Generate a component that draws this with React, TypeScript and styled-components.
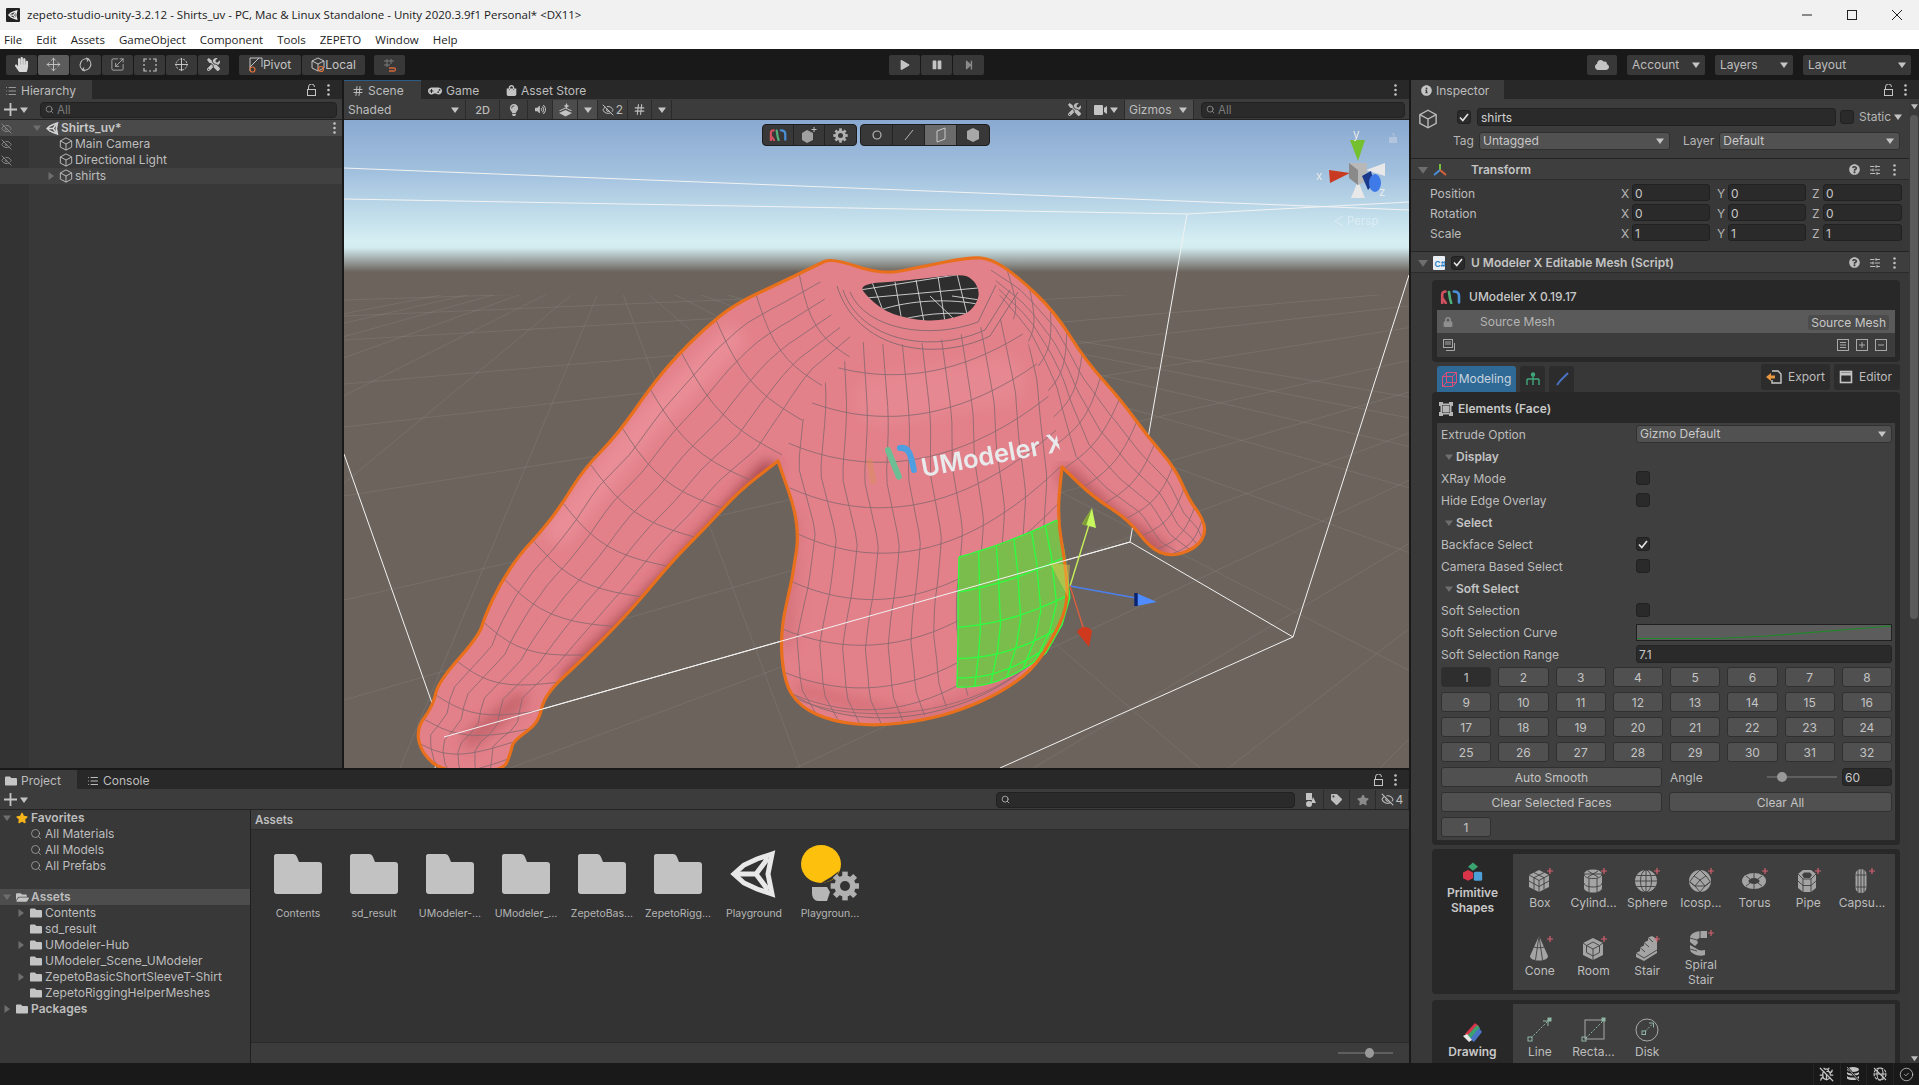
import React from "react";
import styled, { createGlobalStyle } from "styled-components";
import { FaTools, FaGamepad, FaShoppingBag, FaLightbulb, FaVolumeUp, FaQuestionCircle, FaInfoCircle, FaFolder, FaFolderOpen, FaStar, FaCloud, FaPlay, FaPause, FaStepForward, FaTag, FaLock, FaHandPaper } from "react-icons/fa";
import { Move, Scaling, Hash, EyeOff, SlidersHorizontal, Search, CircleCheck, List, BugOff } from "lucide-react";

const UI = `Inter, "Noto Sans", sans-serif`;
const WIN = `"Open Sans", "Noto Sans", sans-serif`;

const Global = createGlobalStyle`
  html, body { margin: 0; padding: 0; background: #191919; overflow: hidden; }
  * { box-sizing: border-box; }
  #root { width: 1919px; height: 1085px; }
`;

/* ---------- shell ---------- */
const Shell = styled.div`
  width: 1919px; height: 1085px; display: flex; flex-direction: column;
  font: 12px/16px ${UI}; color: #bdbdbd; overflow: hidden; background: #191919;
`;
const TitleBar = styled.div`
  height: 30px; flex: none; background: #f1f1f1; display: flex; align-items: center; padding-left: 6px;
  font: 11.5px/16px ${WIN}; color: #1a1a1a;
`;
const TitleLogo = styled.div`
  width: 14px; height: 14px; background: #222; margin-right: 7px; border-radius: 1px; display: flex; align-items: center; justify-content: center;
`;
const WinButtons = styled.div`
  margin-left: auto; display: flex; align-items: center; color: #222; padding-right: 17px; gap: 35px;
`;
const MenuBar = styled.div`
  height: 19px; flex: none; background: #fff; display: flex; align-items: center; padding-left: 4px; gap: 14px;
  font: 11.5px/16px ${WIN}; color: #222;
`;
const Toolbar = styled.div`
  height: 31px; flex: none; background: #191919; display: flex; align-items: center; padding: 0 8px 0 6px;
`;
const ToolGroup = styled.div<{ $ml?: number }>`
  display: flex; gap: 1px; margin-left: ${p => p.$ml ?? 0}px; align-items: center;
`;
const ToolBtn = styled.div<{ $active?: boolean; $w?: number; $auto?: boolean }>`
  width: ${p => p.$w ?? 31}px; height: 20px; background: ${p => (p.$active ? "#5c5c5c" : "#383838")};
  margin-left: ${p => (p.$auto ? "auto" : "0")};
  display: flex; align-items: center; justify-content: center; color: #c4c4c4; font-size: 12px; border-radius: 2px; flex: none;
`;
const DropBtn = styled.div<{ $w: number; $ml: number }>`
  width: ${p => p.$w}px; margin-left: ${p => p.$ml}px; height: 20px; background: #383838; border-radius: 2px;
  display: flex; align-items: center; justify-content: space-between; padding: 0 5px; color: #bdbdbd; flex: none;
`;
const Main = styled.div`flex: 1; display: flex; min-height: 0;`;
const LeftArea = styled.div`width: 1409px; flex: none; display: flex; flex-direction: column;`;
const TopRow = styled.div`height: 688px; flex: none; display: flex; gap: 2px;`;
const Hierarchy = styled.div`width: 342px; flex: none; display: flex; flex-direction: column; background: #383838;`;
const SceneCol = styled.div`flex: 1; display: flex; flex-direction: column; min-width: 0;`;
const TabBar = styled.div`
  height: 19px; flex: none; background: #282828; display: flex; align-items: stretch; color: #bdbdbd;
`;
const Tab = styled.div<{ $active?: boolean; $w?: number; $blue?: boolean }>`
  width: ${p => (p.$w ? p.$w + "px" : "auto")}; flex: none; display: flex; align-items: center; gap: 4px; padding: 1px 0 0 5px;
  background: ${p => (p.$active ? "#3c3c3c" : "transparent")};
  border-top: 1px solid ${p => (p.$blue ? "#2c5d87" : "transparent")};
`;
const TabIcon = styled.span<{ $ml?: number }>`display: flex; margin-left: ${p => p.$ml ?? 0}px;`;
const TabEnd = styled.div`
  margin-left: auto; display: flex; align-items: center; gap: 11px; padding-right: 12px; color: #c4c4c4;
`;
const Strip = styled.div`
  height: 21px; flex: none; background: #3c3c3c; border-bottom: 1px solid #232323; display: flex; align-items: center; padding-top: 1px;
`;
const PlusBtn = styled.div`
  width: 30px; flex: none; display: flex; align-items: center; padding-left: 4px; gap: 3px; color: #c4c4c4;
`;
const SearchField = styled.div<{ $w?: number; $ml?: number }>`
  width: ${p => (p.$w ? p.$w + "px" : "auto")}; flex: ${p => (p.$w ? "none" : 1)}; height: 16px; background: #2a2a2a; border: 1px solid #212121; border-radius: 4px;
  display: flex; align-items: center; padding-left: 4px; gap: 3px; color: #7c7c7c; font-size: 11.5px;
  margin: 0 ${p => (p.$w ? 0 : 5)}px 0 ${p => p.$ml ?? 10}px;
`;
const HierList = styled.div`flex: 1; background: linear-gradient(90deg, #333 29px, #383838 29px);`;
const HRow = styled.div<{ $bg?: string; $strong?: boolean }>`
  height: 16px; display: flex; align-items: center; background: ${p => p.$bg ?? "transparent"};
  font-weight: ${p => (p.$strong ? 600 : 400)}; color: ${p => (p.$strong ? "#c8c8c8" : "#bdbdbd")}; font-size: 12px;
`;
const Gutter = styled.div`width: 29px; flex: none; padding-left: 1px; display: flex; align-items: center; color: #8a8a8a;`;
const HArrow = styled.div<{ $w: number }>`width: ${p => p.$w}px; flex: none; display: flex; justify-content: flex-end; padding-right: 3px;`;
const IconSlot = styled.div<{ $w?: number }>`
  width: ${p => p.$w ?? 16}px; flex: none; display: flex; align-items: center; justify-content: center;
`;
const RowEnd = styled.div`margin-left: auto; padding-right: 6px; display: flex; color: #c4c4c4;`;
const SceneStrip = styled(Strip)`padding-right: 4px;`;
const SBtn = styled.div<{ $w: number; $active?: boolean; $left?: boolean; $ml?: number }>`
  width: ${p => p.$w}px; height: 19px; flex: none; display: flex; align-items: center; justify-content: ${p => (p.$left ? "space-between" : "center")};
  gap: 2px; padding: ${p => (p.$left ? "0 6px 0 4px" : "0")}; border-right: 1px solid #2b2b2b; color: #bdbdbd; margin-left: ${p => p.$ml ?? 0}px;
  background: ${p => (p.$active ? "#4c4c4c" : "transparent")};
`;
const TwoD = styled.span`font-weight: 500; font-size: 11px;`;
const Spacer = styled.div`flex: 1;`;
const Viewport = styled.div`position: relative; flex: 1; overflow: hidden; background: #6a625b;`;
const SceneSvg = styled.svg`display: block; width: 1065px; height: 648px;`;
const OverlayBar = styled.div`
  position: absolute; left: 418px; top: 4px; display: flex; gap: 3px;
`;
const OverlayGroup = styled.div`
  display: flex; background: #383838; border: 1px solid #1d1d1d; border-radius: 4px; overflow: hidden; height: 22px;
`;
const OverlayBtn = styled.div<{ $active?: boolean; $w?: number }>`
  width: ${p => p.$w ?? 32}px; display: flex; align-items: center; justify-content: center; color: #b5b5b5;
  background: ${p => (p.$active ? "#6b6b6b" : "transparent")};
  border-right: 1px solid #232323;
  &:last-child { border-right: 0; }
`;

/* ---------- project ---------- */
const Project = styled.div`flex: 1; margin-top: 2px; display: flex; flex-direction: column; min-height: 0;`;
const ProjBody = styled.div`flex: 1; display: flex; min-height: 0;`;
const ProjTree = styled.div`width: 250px; flex: none; background: #383838;`;
const TRow = styled.div<{ $level?: number; $sel?: boolean; $top?: number; $strong?: boolean }>`
  height: 16px; display: flex; align-items: center; padding-left: ${p => (p.$level ?? 0) * 14}px;
  margin-top: ${p => p.$top ?? 0}px; background: ${p => (p.$sel ? "#4d4d4d" : "transparent")};
  font-weight: ${p => (p.$strong ? 600 : 400)};
`;
const ArrowSlot = styled.div`width: 14px; flex: none; display: flex; justify-content: center;`;
const TLabel = styled.span`margin-left: 1px; white-space: nowrap;`;
const ProjRight = styled.div`flex: 1; border-left: 1px solid #1f1f1f; display: flex; flex-direction: column; background: #333;`;
const AssetsHead = styled.div`
  height: 20px; flex: none; background: #3e3e3e; border-bottom: 1px solid #2b2b2b; padding-left: 4px;
  display: flex; align-items: center; font-weight: 600; color: #bdbdbd; font-size: 11.5px;
`;
const AssetGrid = styled.div`flex: 1; display: flex; padding: 15px 0 0 9px;`;
const AssetCell = styled.div`width: 76px; flex: none; display: flex; flex-direction: column; align-items: center;`;
const AssetIcon = styled.div`height: 57px; display: flex; align-items: center; justify-content: center;`;
const AssetName = styled.div`margin-top: 5px; font-size: 10.5px; line-height: 14px; color: #b5b5b5; white-space: nowrap;`;
const ProjFoot = styled.div`
  height: 21px; flex: none; background: #3c3c3c; border-top: 1px solid #2b2b2b; display: flex; align-items: center; justify-content: flex-end; padding-right: 16px;
`;
const MiniSlider = styled.div`width: 55px; height: 2px; background: #5f5f5f; position: relative;`;
const MiniThumb = styled.div<{ $x: number; $d?: number }>`
  position: absolute; left: ${p => p.$x}px; top: 50%; width: ${p => p.$d ?? 9}px; height: ${p => p.$d ?? 10}px; border-radius: 50%; background: #999; transform: translateY(-50%);
`;

/* ---------- inspector ---------- */
const Splitter = styled.div`width: 2px; flex: none; background: #191919;`;
const Inspector = styled.div`flex: 1; display: flex; flex-direction: column; min-width: 0; background: #383838;`;
const InspBody = styled.div`flex: 1; display: flex; min-height: 0;`;
const InspContent = styled.div`flex: 1; overflow: hidden; display: flex; flex-direction: column; min-width: 0;`;
const Scrollbar = styled.div`
  width: 10px; flex: none; background: #3a3a3a; display: flex; flex-direction: column; align-items: center; padding-top: 4px;
`;
const ScrollThumb = styled.div`width: 8px; height: 504px; background: #5a5a5a; border-radius: 4px; margin-top: 5px;`;
const ScrollDown = styled.div`margin-top: auto; height: 10px; display: flex; align-items: center;`;
const ObjectHead = styled.div`
  height: 60px; flex: none; background: #3c3c3c; border-bottom: 1px solid #232323; display: flex;
`;
const ObjIcon = styled.div`width: 42px; flex: none; padding: 10px 0 0 7px; color: #bdbdbd; display: flex; align-items: flex-start;`;
const ObjCol = styled.div`flex: 1; display: flex; flex-direction: column; padding-top: 9px; gap: 6px;`;
const ObjRow = styled.div`height: 18px; display: flex; align-items: center;`;
const Check = styled.div<{ $ml?: number }>`
  width: 14px; height: 14px; flex: none; background: #2a2a2a; border: 1px solid #212121; border-radius: 3px; margin-left: ${p => p.$ml ?? 0}px;
  display: flex; align-items: center; justify-content: center;
`;
const NameField = styled.div`
  width: 359px; height: 18px; flex: none; margin-left: 6px; background: #2a2a2a; border: 1px solid #212121; border-radius: 3px; padding-left: 3px; color: #d2d2d2; font-size: 12px; line-height: 18px;
`;
const Dropdown = styled.div<{ $w: number; $ml?: number }>`
  width: ${p => p.$w}px; height: 18px; flex: none; margin-left: ${p => p.$ml ?? 0}px; background: #515151; border: 1px solid #303030; border-radius: 3px;
  display: flex; align-items: center; justify-content: space-between; padding: 0 5px 0 3px; color: #c8c8c8; font-size: 12px;
`;
const SmallLabel = styled.span<{ $ml?: number }>`margin-left: ${p => p.$ml ?? 0}px; color: #b5b5b5;`;
const CaretWrap = styled.span`margin-left: 3px; display: flex;`;
const CompHead = styled.div`
  height: 21px; flex: none; background: #3e3e3e; border-bottom: 1px solid #2b2b2b; display: flex; align-items: center; font-weight: 600; color: #c4c4c4; padding-top: 1px;
`;
const HeadArrow = styled.div`width: 22px; flex: none; display: flex; justify-content: flex-end; padding-right: 5px;`;
const HeadIcon = styled.div<{ $w: number }>`width: ${p => p.$w}px; flex: none; display: flex; align-items: center; gap: 6px;`;
const HeadTools = styled.div`margin-left: auto; display: flex; align-items: center; gap: 9px; padding-right: 13px; color: #bdbdbd;`;
const DotsWrap = styled.span`display: flex; margin-left: 3px;`;
const TransformBody = styled.div`
  flex: none; padding: 4px 0 0 19px; height: 72px; display: flex; flex-direction: column; gap: 3px; border-bottom: 1px solid #232323;
`;
const VecRow = styled.div`height: 17px; display: flex; align-items: center;`;
const VecLabel = styled.div`width: 191px; flex: none; padding-top: 2px;`;
const Axis = styled.div<{ $w: number; $ml?: number }>`width: ${p => p.$w}px; flex: none; color: #b5b5b5; margin-left: ${p => p.$ml ?? 0}px; padding-top: 2px;`;
const VecField = styled.div<{ $w: number }>`
  width: ${p => p.$w}px; flex: none; height: 17px; background: #2a2a2a; border: 1px solid #212121; border-radius: 3px; padding-left: 2px; line-height: 17px; color: #c8c8c8;
`;
const Card = styled.div<{ $mt?: number }>`
  margin: ${p => p.$mt ?? 0}px 9px 0 21px; background: #282828; border-radius: 4px; flex: none; overflow: hidden;
`;
const ScriptBody = styled.div`flex: none; padding-top: 7px; display: flex; flex-direction: column;`;
const CardTitle = styled.div`
  height: 30px; display: flex; align-items: center; padding: 3px 0 0 8px; gap: 8px; font-weight: 500; color: #c8c8c8;
`;
const SrcRow = styled.div`
  height: 23px; margin: 0 5px; background: #5a5a5a; display: flex; align-items: center; padding: 1px 6px 0; color: #b5b5b5;
`;
const SrcLabel = styled.span`margin-left: 27px;`;
const SrcPill = styled.div`margin-left: auto; background: #4c4c4c; border-radius: 3px; padding: 0 3px; color: #c8c8c8; height: 15px; line-height: 15px;`;
const SrcFoot = styled.div`
  height: 24px; margin: 0 5px 5px; background: #3c3c3c; display: flex; align-items: center; padding: 0 8px 0 6px; color: #a8a8a8;
`;
const MiniIcons = styled.div`margin-left: auto; display: flex; gap: 7px;`;
const TabsRow = styled.div`
  height: 30px; flex: none; margin: 0 9px 0 26px; display: flex; align-items: flex-end;
`;
const ModeTab = styled.div<{ $w: number; $active?: boolean }>`
  width: ${p => p.$w}px; height: 26px; flex: none; margin-right: 4px; background: ${p => (p.$active ? "#2f6a96" : "#2c2c2c")};
  border-radius: 3px 3px 0 0; display: flex; align-items: center; justify-content: center; gap: 2px; color: #c8d4de;
`;
const ActionBtn = styled.div<{ $w: number; $ml?: string }>`
  width: ${p => p.$w}px; height: 26px; flex: none; margin: 0 0 2px ${p => p.$ml ?? "4px"}; background: #2c2c2c; border-radius: 3px;
  display: flex; align-items: center; padding-left: 5px; gap: 6px; color: #bdbdbd;
`;
const SectionHead = styled.div`
  height: 31px; display: flex; align-items: center; padding: 3px 0 0 7px; gap: 5px; font-weight: 600; color: #c8c8c8;
`;
const SectionBody = styled.div`margin: 0 5px 5px; background: #3f3f3f; padding: 0 3px 3px 4px;`;
const SetRow = styled.div`height: 22px; display: flex; align-items: center;`;
const SetLabel = styled.div`width: 195px; flex: none; white-space: nowrap; padding-top: 2px;`;
const Foldout = styled.div`height: 22px; display: flex; align-items: center; padding: 1px 0 0 4px; gap: 3px; font-weight: 600; color: #c4c4c4;`;
const CurveField = styled.div`width: 256px; height: 17px; flex: none; background: #5c5c5c; border: 1px solid #202020;`;
const TextField = styled.div<{ $w: number; $ml?: number }>`
  width: ${p => p.$w}px; height: 18px; flex: none; margin-left: ${p => p.$ml ?? 0}px; background: #2a2a2a; border-radius: 3px; border: 1px solid #232323; padding-left: 2px; line-height: 17px; color: #c8c8c8;
`;
const NumGrid = styled.div`
  display: grid; grid-template-columns: repeat(8, 1fr); gap: 5px 7px; margin-top: 2px;
`;
const Btn = styled.div<{ $dark?: boolean }>`
  height: 20px; background: ${p => (p.$dark ? "#2e2e2e" : "#505050")}; border: 1px solid #303030; border-radius: 3px; padding-top: 1px;
  display: flex; align-items: center; justify-content: center; color: #c4c4c4;
`;
const WideGrid = styled.div`display: grid; grid-template-columns: 221px 223px; gap: 5px 7px; margin-top: 5px; align-items: center;`;
const AngleRow = styled.div`display: flex; align-items: center;`;
const AngleLabel = styled.span`width: 97px; flex: none; margin-left: 1px; padding-top: 2px;`;
const AngleSlider = styled.div`width: 70px; flex: none; height: 2px; background: #5f5f5f; position: relative;`;
const OneBtn = styled(Btn)`width: 50px; margin-top: 5px;`;
const ToolCard = styled(Card)`display: flex; min-height: 145px;`;
const ToolSide = styled.div<{ $pt: number }>`
  width: 81px; flex: none; padding-top: ${p => p.$pt}px; display: flex; flex-direction: column; align-items: center; text-align: center; font-weight: 600; line-height: 15px; color: #c8c8c8;
`;
const SideIcon = styled.div`height: 22px; margin-bottom: 1px;`;
const ToolGrid = styled.div<{ $mt?: number }>`
  flex: 1; margin: ${p => p.$mt ?? 5}px 5px 4px 0; background: #3f3f3f; display: grid; grid-template-columns: repeat(7, 53.7px); grid-auto-rows: 68px; align-content: start;
`;
const ToolItem = styled.div<{ $pt?: number }>`
  display: flex; flex-direction: column; align-items: center; padding-top: ${p => p.$pt ?? 13}px; text-align: center; line-height: 15px; white-space: nowrap; color: #bdbdbd;
`;
const ToolIcon = styled.div`height: 28px; width: 36px; display: flex; justify-content: center; align-items: center;`;
const StatusBar = styled.div`
  height: 22px; flex: none; background: #191919; display: flex; align-items: center; justify-content: flex-end; color: #c4c4c4;
`;
const StatusCell = styled.div`width: 26.5px; height: 22px; display: flex; align-items: center; justify-content: center; border-left: 1px solid #242424;`;

/* ---------- small drawings ---------- */
const Tri: React.FC<{ dir?: "d" | "r"; c?: string; s?: number }> = ({ dir = "d", c = "#6e6e6e", s = 8 }) => (
  <svg width={s} height={s} viewBox="0 0 8 8">
    <path d={dir === "d" ? "M0 1.5H8L4 7Z" : "M1.5 0V8L7 4Z"} fill={c} />
  </svg>
);
const Caret = () => <Tri c="#c4c4c4" />;
const Dots: React.FC = () => (
  <svg width="3" height="12" viewBox="0 0 3 12" fill="currentColor">
    <circle cx="1.5" cy="1.5" r="1.3" /><circle cx="1.5" cy="6" r="1.3" /><circle cx="1.5" cy="10.5" r="1.3" />
  </svg>
);
const Unlock = () => (
  <svg width="9" height="12" viewBox="0 0 9 12" fill="none" stroke="currentColor">
    <path d="M1.5 5.5V3a3 3 0 0 1 6 0" /><rect x=".5" y="5.5" width="8" height="6" />
  </svg>
);
const Cube: React.FC<{ s?: number }> = ({ s = 14 }) => (
  <svg width={s} height={s} viewBox="0 0 16 16" fill="none" stroke="#bdbdbd" strokeWidth="1.1">
    <path d="M8 1L14.5 4.5V11.5L8 15L1.5 11.5V4.5Z" /><path d="M1.5 4.5L8 8L14.5 4.5M8 8V15" />
  </svg>
);
const UnityMark: React.FC<{ s: number; c?: string; w?: number }> = ({ s, c = "#e8e8e8", w = 5 }) => (
  <svg width={s} height={s} viewBox="0 0 48 48" fill="none" stroke={c} strokeWidth={w} strokeLinejoin="miter">
    <path d="M42 4L27 9 14 15 4 24 14 33 27 39 42 44 38 24Z" />
    <path d="M4 24H26L38 8M26 24L38 40" />
  </svg>
);
const UMark: React.FC<{ h?: number }> = ({ h = 14 }) => (
  <svg width={h * 1.5} height={h} viewBox="0 0 21 14" fill="none" strokeWidth="2.6" strokeLinecap="round">
    <path d="M2.2 13V4.5C2.2 2 4 1.5 5.5 1.5" stroke="#d2505f" /><path d="M3 9L5.8 13" stroke="#d2505f" />
    <path d="M9 2L10 8.5 11.2 13" stroke="#4fb07a" />
    <path d="M13.8 1.5C17.5 1.5 19 3 19 6V12.5" stroke="#4a8fd8" />
  </svg>
);
const CheckMark = () => (
  <svg width="10" height="9" viewBox="0 0 10 9" fill="none" stroke="#e4e4e4" strokeWidth="1.6"><path d="M1 4.5L3.8 7.5 9 1" /></svg>
);
const Folder = () => (
  <svg width="48" height="40" viewBox="0 0 48 40">
    <path d="M2 0H19C21 0 22 1 23 3L25 8H45C47 8 48 9 48 11V37C48 39 47 40 45 40H3C1 40 0 39 0 37V2C0 1 1 0 2 0Z" fill="#c2c2c2" />
  </svg>
);
const Gear: React.FC<{ s: number; c?: string; bg?: string }> = ({ s, c = "#b0b0b0", bg = "#333" }) => (
  <svg width={s} height={s} viewBox="0 0 24 24">
    <g fill={c}>
      {[0, 45, 90, 135, 180, 225, 270, 315].map(a => <rect key={a} x="9.8" y="0.5" width="4.4" height="5.5" transform={`rotate(${a} 12 12)`} />)}
      <circle cx="12" cy="12" r="8.5" />
    </g>
    <circle cx="12" cy="12" r="4" fill={bg} />
  </svg>
);
const Bulb = () => (
  <svg width="58" height="58" viewBox="0 0 58 58">
    <ellipse cx="20" cy="19" rx="20" ry="19" fill="#fdc00d" />
    <path d="M20 38C28 38 35 33 38 26L30 32Z" fill="#333" />
    <path d="M11 42H26L29 47 26 56H17C13 56 11 52 11 48Z" fill="#b6b6b6" />
    <g transform="translate(29 26)"><Gear s={30} bg="#333" /></g>
  </svg>
);
const PlusMark = () => <path d="M24 1V7M21 4H27" stroke="#d4606e" strokeWidth="1.2" fill="none" />;
const Prim: React.FC<{ k: string }> = ({ k }) => {
  const ln = { stroke: "#3f3f3f", strokeWidth: 0.9, fill: "none" };
  const fl = "#a4a4a4";
  const shapes: Record<string, React.ReactNode> = {
    box: <><path d="M13 3L23 8V20L13 25 3 20V8Z" fill={fl} /><path d="M3 8L13 13.5 23 8M13 13.5V25M8 5.5L18 10.7M18 5.5L8 10.7M3 14L13 19.5 23 14M8 10.7V22.5M18 10.7V22.5" {...ln} /></>,
    cyl: <><path d="M4 7V21C4 23.5 8 25.5 13 25.5S22 23.5 22 21V7Z" fill={fl} /><ellipse cx="13" cy="7" rx="9" ry="4.5" fill={fl} /><path d="M4 7C4 10 8 11.5 13 11.5S22 10 22 7M4 16C4 18.5 8 20 13 20S22 18.5 22 16M9 11V25M17 11V25M8 4L18 10M18 4L8 10M4 7H22" {...ln} /></>,
    sph: <><circle cx="13" cy="14" r="11" fill={fl} /><path d="M2 14H24M3.5 8.5H22.5M3.5 19.5H22.5" {...ln} /><ellipse cx="13" cy="14" rx="5.5" ry="11" {...ln} /><path d="M13 3V25" {...ln} /></>,
    ico: <><circle cx="13" cy="14" r="11" fill={fl} /><path d="M13 3L7 9 13 13 19 9ZM7 9L2.5 15 8 19 13 13M19 9L23.5 15 18 19 13 13M8 19H18L13 25ZM8 19L3 15M18 19L23 15" {...ln} /></>,
    tor: <><ellipse cx="13" cy="14" rx="12" ry="8" fill={fl} /><ellipse cx="13" cy="14" rx="5.5" ry="3" fill="#3f3f3f" /><path d="M5 9L9 12M21 9L17 12M5 19L9 16M21 19L17 16M13 6V11M13 17V22" {...ln} /></>,
    pip: <><path d="M4 7L9 3H17L22 7V21L17 25H9L4 21Z" fill={fl} /><path d="M8 8L10 5.5H16L18 8 16 11H10Z" fill="#3f3f3f" /><path d="M4 7L9 12H17L22 7M4 14L9 18.5H17L22 14M9 12V25M17 12V25" {...ln} /></>,
    cap: <><rect x="7.5" y="2" width="11" height="24" rx="5.5" fill={fl} /><path d="M13 2V26M10 3V25M16 3V25M7.5 8H18.5M7.5 20H18.5" {...ln} /></>,
    con: <><path d="M13 1L22 21C22 24 18 25.5 13 25.5S4 24 4 21Z" fill={fl} /><path d="M13 1L9.5 25M13 1L16.5 25M8 12C10 13 16 13 18 12" {...ln} /></>,
    rom: <><path d="M13 3L23 8V20L13 25 3 20V8Z" fill={fl} /><path d="M13 7L19.5 10.5V17.5L13 21 6.5 17.5V10.5Z" {...ln} /><path d="M3 8L6.5 10.5M23 8L19.5 10.5M13 25V21M6.5 10.5L13 14 19.5 10.5M13 14V21" {...ln} /></>,
    sta: <><path d="M3 22L3 18 7 16V12.5L11 10.5V7.5L15 5.5V2.5L19 1 24 4V18L11 26Z" fill={fl} /><path d="M3 18L11 23 24 15M7 12.5L12 17M11 7.5L16 12M15 2.5L20 7" {...ln} /></>,
    spi: <><path d="M3 9C3 5 8 2 15 2H20V9H13C12 9 10 10 10 11L11 14 8 17 3 13ZM3 16L10 20C11 21 14 22 18 21V26C12 28 3 25 3 20Z" fill={fl} /><path d="M3 9L10 11M13 2V9M3 20L10 22" {...ln} /></>,
  };
  return <svg width="28" height="28" viewBox="0 0 28 28">{shapes[k]}<PlusMark /></svg>;
};
const DrawIcon: React.FC<{ k: string }> = ({ k }) => (
  <svg width="28" height="28" viewBox="0 0 28 28" fill="none" stroke="#8fb7a5" strokeWidth="1">
    {k === "line" && <><path d="M5 22L23 4" strokeDasharray="2 1.5" /><rect x="2" y="21" width="4" height="4" /><rect x="22" y="2" width="3" height="3" fill="#8fb7a5" /><path d="M17 5H22V10" /></>}
    {k === "rect" && <><rect x="5" y="4" width="19" height="19" stroke="#a8a8a8" /><path d="M6 22L23 5" strokeDasharray="2 1.5" /><rect x="2" y="21" width="4" height="4" /><rect x="22" y="2" width="3" height="3" fill="#8fb7a5" /></>}
    {k === "disk" && <><circle cx="14" cy="14" r="11" stroke="#a8a8a8" /><rect x="9" y="15" width="3.5" height="3.5" /><path d="M12.5 15L20 7.5" strokeDasharray="2 1.5" /><path d="M16 7H20.5V11.5" /></>}
  </svg>
);

/* ---------- mesh helpers ---------- */
type P = [number, number];
function at(poly: P[], u: number): P {
  const seg: number[] = [];
  let tot = 0;
  for (let i = 1; i < poly.length; i++) {
    const d = Math.hypot(poly[i][0] - poly[i - 1][0], poly[i][1] - poly[i - 1][1]);
    seg.push(d); tot += d;
  }
  let t = u * tot;
  for (let i = 0; i < seg.length; i++) {
    if (t <= seg[i] || i === seg.length - 1) {
      const k = seg[i] ? t / seg[i] : 0;
      return [poly[i][0] + (poly[i + 1][0] - poly[i][0]) * k, poly[i][1] + (poly[i + 1][1] - poly[i][1]) * k];
    }
    t -= seg[i];
  }
  return poly[poly.length - 1];
}
const f = (n: number) => n.toFixed(1);
const line = (pts: P[]) => "M" + pts.map(p => f(p[0]) + " " + f(p[1])).join("L");
function smooth(pts: P[]): string {
  const n = pts.length;
  const mid = (a: P, b: P): P => [(a[0] + b[0]) / 2, (a[1] + b[1]) / 2];
  const s = mid(pts[n - 1], pts[0]);
  let d = `M${f(s[0])} ${f(s[1])}`;
  for (let i = 0; i < n; i++) { const m = mid(pts[i], pts[(i + 1) % n]); d += `Q${f(pts[i][0])} ${f(pts[i][1])} ${f(m[0])} ${f(m[1])}`; }
  return d + "Z";
}
function armGrid(T: P[], B: P[], us: number[], vs: number[], bow: number): string {
  const out: string[] = [];
  const dx = T[T.length - 1][0] - T[0][0], dy = T[T.length - 1][1] - T[0][1];
  const L = Math.hypot(dx, dy);
  const sample = (u: number, v: number): P => {
    const a = at(T, u), b = at(B, u);
    const s = Math.sin(Math.PI * v) * bow;
    return [a[0] + (b[0] - a[0]) * v + (dx / L) * s, a[1] + (b[1] - a[1]) * v + (dy / L) * s];
  };
  us.forEach(u => { const p: P[] = []; for (let i = 0; i <= 10; i++) p.push(sample(u, i / 10)); out.push(line(p)); });
  vs.forEach(v => { const p: P[] = []; for (let i = 0; i <= 48; i++) p.push(sample(i / 48, v)); out.push(line(p)); });
  return out.join("");
}
function bodyGrid(L: P[], R: P[], sag: (v: number) => number, vs: number[], ws: number[]) {
  const pt = (v: number, t: number): P => {
    const a = at(L, v), b = at(R, v);
    const s = sag(v);
    const cx = (a[0] + b[0]) / 2, cy = (a[1] + b[1]) / 2 + s;
    const q = 1 - t;
    return [q * q * a[0] + 2 * q * t * cx + t * t * b[0], q * q * a[1] + 2 * q * t * cy + t * t * b[1]];
  };
  const out: string[] = [];
  vs.forEach(v => { const p: P[] = []; for (let i = 0; i <= 24; i++) p.push(pt(v, i / 24)); out.push(line(p)); });
  ws.forEach(w => { const p: P[] = []; for (let i = 0; i <= 30; i++) p.push(pt(i / 30, w)); out.push(line(p)); });
  return { d: out.join(""), pt };
}
const steps = (a: number, b: number, n: number) => Array.from({ length: n + 1 }, (_, i) => a + ((b - a) * i) / n);

const silhouette: P[] = [
  [832, 258], [817, 265], [778, 284], [735, 304], [704, 329], [674, 359], [650, 388], [618, 434], [583, 470], [561, 506], [539, 534], [520, 554], [500, 584], [485, 616], [479, 636], [438, 682], [433, 706], [416, 729], [422, 754], [444, 772], [503, 772], [511, 752], [513, 741], [539, 723], [544, 695], [583, 659], [618, 624], [644, 595], [674, 559], [709, 524], [739, 491], [778, 461], [778, 461], [800, 524], [793, 577], [780, 631], [784, 682], [800, 707], [834, 722], [878, 726], [925, 720], [961, 710], [1000, 693], [1032, 670], [1050, 643], [1068, 607], [1066, 567], [1057, 517], [1062, 467], [1062, 467], [1093, 497], [1129, 520], [1150, 548], [1171, 557], [1196, 548], [1206, 533], [1202, 517], [1189, 500], [1175, 468], [1148, 437], [1121, 400], [1085, 360], [1055, 312], [1016, 275], [991, 259], [971, 257], [925, 266], [882, 275],
];
const silPath = smooth(silhouette);
const neckHole: P[] = [[858, 284], [904, 281], [960, 274], [972, 278], [980, 291], [976, 305], [964, 316], [930, 322], [891, 315], [869, 299]];

const armT: P[] = [[817, 262], [778, 282], [735, 302], [704, 327], [674, 359], [650, 388], [618, 434], [583, 470], [561, 506], [539, 534], [520, 554], [500, 584], [485, 616], [479, 636], [438, 682], [433, 706], [416, 729], [422, 754], [444, 775]];
const armB: P[] = [[862, 345], [825, 380], [800, 425], [778, 461], [739, 491], [709, 524], [674, 559], [644, 595], [618, 624], [583, 659], [544, 695], [539, 723], [513, 741], [511, 752], [503, 775]];
const armGridL = armGrid(armT, armB, [.03, .1, .17, .24, .31, .38, .45, .52, .59, .66, .73, .8, .86, .9, .94, .97], [.17, .33, .5, .67, .83], 14);
const armTR: P[] = [[985, 258], [1016, 275], [1055, 312], [1085, 360], [1121, 400], [1148, 437], [1175, 468], [1189, 500], [1202, 517], [1206, 533]];
const armBR: P[] = [[1000, 300], [1028, 340], [1050, 395], [1062, 467], [1093, 497], [1129, 520], [1150, 548], [1171, 557], [1180, 555]];
const armGridR = armGrid(armTR, armBR, [.07, .15, .23, .31, .39, .47, .55, .63, .71, .79, .86, .92, .96], [.2, .4, .6, .8], 8);
const bodyL: P[] = [[790, 318], [790, 390], [782, 460], [800, 524], [793, 577], [780, 631], [784, 682], [800, 707]];
const bodyR: P[] = [[1032, 300], [1050, 370], [1060, 467], [1057, 517], [1066, 567], [1068, 605]];
const bodySurf = bodyGrid(bodyL, bodyR, v => 70 + v * 42, [.08, .19, .31, .43, .55, .67, .79, .9, .96], steps(.06, .95, 11));

const patchL: P[] = [[959, 557], [958, 600], [958, 640], [957, 687]];
const patchR: P[] = [[1057, 520], [1064, 550], [1070, 597], [1062, 625], [1046, 653]];
const patchSurf = bodyGrid(patchL, patchR, v => 5 + v * 14, [0, .27, .54, .78, .93, 1], [0, .2, .38, .56, .74, .88, 1]);
const patchOutline = (() => {
  const p: P[] = [];
  for (let i = 0; i <= 20; i++) p.push(patchSurf.pt(0, i / 20));
  for (let i = 0; i <= 20; i++) p.push(patchSurf.pt(i / 20, 1));
  for (let i = 20; i >= 0; i--) p.push(patchSurf.pt(1, i / 20));
  for (let i = 20; i >= 0; i--) p.push(patchSurf.pt(i / 20, 0));
  return line(p) + "Z";
})();

const groundLines = (() => {
  const out: string[] = [];
  const v1: P = [1900, 250], v2: P = [611, 262];
  [300, 316, 340, 384, 427, 496, 600, 700, 830, 980, 1180, 1450, 1800].forEach(y => {
    out.push(`M344 ${y}L${v1[0]} ${v1[1]}`);
  });
  for (let x = -2200; x <= 3600; x += 400) {
    out.push(`M${x + 200} 768L${v2[0]} ${v2[1]}`);
  }
  return out.join("");
})();

const meshStroke = "#8f6a70";

const SceneDrawing: React.FC = () => (
  <SceneSvg viewBox="344 120 1065 648">
    <defs>
      <linearGradient id="sky" x1="0" y1="120" x2="0" y2="272" gradientUnits="userSpaceOnUse">
        <stop offset="0" stopColor="#8aa9d1" />
        <stop offset=".35" stopColor="#a2c1de" />
        <stop offset=".8" stopColor="#d5eff3" />
        <stop offset=".84" stopColor="#d3ecf0" />
        <stop offset="1" stopColor="#6b635c" />
      </linearGradient>
      <clipPath id="sil"><path d={silPath} /></clipPath>
      <clipPath id="neck"><path d={smooth(neckHole)} /></clipPath>
      <clipPath id="groundclip"><rect x="344" y="295" width="1065" height="473" /></clipPath>
      <filter id="b6"><feGaussianBlur stdDeviation="7" /></filter>
      <filter id="b1"><feGaussianBlur stdDeviation=".6" /></filter>
    </defs>
    <rect x="344" y="120" width="1065" height="152" fill="url(#sky)" />
    <rect x="344" y="272" width="1065" height="496" fill="#6b635c" />
    <path d={groundLines} stroke="#8b8680" strokeWidth=".8" opacity=".45" fill="none" clipPath="url(#groundclip)" />

    <path d="M344 168L1409 210M344 199L1187 214 1409 202M1187 214L1130 542M1130 542L1293 637 1409 275M1293 637L1000 768M1130 542L444 737 344 454M444 737L435 768" stroke="#f2f2f2" strokeWidth="1" fill="none" />

    <path d={silPath} fill="#e3818a" />
    <g clipPath="url(#sil)">
      <g filter="url(#b6)" fill="none" strokeLinecap="round">
        <path d="M790 520L786 640" stroke="#c96a6f" strokeWidth="16" opacity=".6" />
        <path d="M800 690L920 720 1020 680" stroke="#cf6a70" strokeWidth="14" opacity=".7" />
        <path d="M880 400L1000 380" stroke="#ea8f98" strokeWidth="50" opacity=".5" />
      </g>
      <path d={bodySurf.d} stroke={meshStroke} strokeWidth=".9" fill="none" />
      <path d={smooth(armB.concat([...armT].reverse()))} fill="#e3818a" />
      <g filter="url(#b6)" fill="none" strokeLinecap="round">
        <path d="M768 470L700 545 640 610 570 680" stroke="#983a41" strokeWidth="18" opacity=".85" />
        <path d="M520 700L470 740" stroke="#a9484e" strokeWidth="14" opacity=".6" />
        <path d="M730 340L650 420 560 530" stroke="#f09aa4" strokeWidth="28" opacity=".5" />
      </g>
      <path d={armGridL} stroke={meshStroke} strokeWidth=".9" fill="none" />
      <g filter="url(#b1)">
        <g transform="translate(866 452) rotate(-10)" fill="none" strokeWidth="6" strokeLinecap="round">
          <path d="M2 30V10" stroke="#d88e58" opacity=".45" />
          <path d="M22 2L28 30" stroke="#6cbf94" />
          <path d="M34 2C42 2 44 8 44 26" stroke="#4f9ee0" />
        </g>
        <text x="0" y="0" transform="translate(923 477) rotate(-10.5)" fontFamily="Inter, sans-serif" fontWeight="600" fontSize="25.5" fill="#e8eaec">UModeler X</text>
      </g>
      <path d={smooth(armBR.concat([...armTR].reverse()))} fill="#e3818a" />
      <path d="M1062 470L1110 515 1165 555" fill="none" stroke="#a5474d" strokeWidth="16" opacity=".75" filter="url(#b6)" />
      <path d={armGridR} stroke={meshStroke} strokeWidth=".9" fill="none" />
      <path d="M850 292C866 330 930 340 978 322L996 285" fill="none" stroke={meshStroke} />
      <path d="M843 290C860 340 930 355 985 330L1010 290" fill="none" stroke={meshStroke} />
      <path d="M837 286C856 348 932 364 990 336L1018 292" fill="none" stroke={meshStroke} />
      <path d="M790 692C840 730 950 730 1030 665" fill="none" stroke={meshStroke} />
      <path d="M795 698C845 722 950 722 1020 672" fill="none" stroke={meshStroke} opacity=".8" />
    </g>
    <path d={smooth(neckHole)} fill="#2e2e2e" />
    <g clipPath="url(#neck)" stroke="#d8d8d8" strokeWidth=".9" fill="none">
      <path d="M860 290L975 272M866 298L978 288M880 310C910 300 950 298 982 305M900 320C930 312 960 312 980 315" />
      <path d="M872 282L885 316M895 282L902 322M916 280L924 322M938 276L945 322M957 274L968 318M930 296L955 320M952 296L980 300" />
    </g>
    <path d={patchOutline} fill="#7abd4c" />
    <path d={patchSurf.d} stroke="#2bff3f" strokeWidth="1.3" fill="none" />
    <path d={silPath} fill="none" stroke="#e8701c" strokeWidth="3.2" strokeLinejoin="round" />

    <path d="M444 737L1130 542" stroke="#f2f2f2" strokeWidth="1" />
    {/* move gizmo */}
    <path d="M1050 563L1060 582 1068 597 1070 565Z" fill="#e7cf4e" opacity=".45" />
    <path d="M1070 586L1092 515" stroke="#c7f05a" strokeWidth="1.4" />
    <path d="M1092 508L1096 528 1082 524Z" fill="#c6f75f" />
    <path d="M1092 508L1082 524 1086 526Z" fill="#7f9e36" />
    <path d="M1070 586L1136 598" stroke="#4d80ee" strokeWidth="1.4" />
    <path d="M1136 593L1157 602 1136 606Z" fill="#4f8cff" />
    <path d="M1136 593V606" stroke="#0b2472" strokeWidth="3.5" />
    <path d="M1070 586L1084 630" stroke="#d95f3f" strokeWidth="1.4" />
    <path d="M1077 632C1080 626 1088 625 1092 631L1089 647Z" fill="#cf3a1e" />
    {/* orientation gizmo */}
    <path d="M1350 140H1365L1358 161Z" fill="#74c02e" />
    <path d="M1329 170L1350 173 1330 183Z" fill="#c93a22" />
    <path d="M1385 163V176L1366 170Z" fill="#e8e8e8" />
    <path d="M1351 198H1365L1358 181Z" fill="#e8e8e8" />
    <path d="M1349 163H1367V181L1358 185 1349 178Z" fill="#b8b8b8" />
    <path d="M1358 170V185L1349 178V163Z" fill="#8a8a8a" />
    <path d="M1362 176L1371 171 1374 183 1368 190Z" fill="#1c3a8c" />
    <ellipse cx="1375" cy="183" rx="6" ry="9" fill="#3f7be8" />
    <g fontFamily="Inter, sans-serif" fontSize="12" fill="#e8e8e8">
      <text x="1353" y="138">y</text><text x="1316" y="180">x</text><text x="1379" y="196">z</text>
    </g>
    <rect x="1389" y="137" width="8" height="6" fill="#c4d2e2" opacity=".6" />
    <path d="M1394 137V134H1392" stroke="#c4d2e2" fill="none" opacity=".6" />
    <text x="1347" y="225" fontFamily="Inter, sans-serif" fontSize="11.5" fill="#ffffff" opacity=".38">Persp</text>
    <path d="M1343 216L1335 221 1343 226" stroke="#fff" opacity=".38" fill="none" />
  </SceneSvg>
);

const numbers = Array.from({ length: 32 }, (_, i) => i + 1);
const prims: [string, string, number?][] = [
  ["box", "Box"], ["cyl", "Cylind..."], ["sph", "Sphere"], ["ico", "Icosp..."], ["tor", "Torus"], ["pip", "Pipe"], ["cap", "Capsu..."],
  ["con", "Cone"], ["rom", "Room"], ["sta", "Stair"], ["spi", "Spiral\nStair", 7],
];
const assets = ["Contents", "sd_result", "UModeler-...", "UModeler_...", "ZepetoBas...", "ZepetoRigg..."];

export default function App() {
  return (
    <Shell>
      <Global />
      <TitleBar>
        <TitleLogo><UnityMark s={10} c="#eee" w={6} /></TitleLogo>
        zepeto-studio-unity-3.2.12 - Shirts_uv - PC, Mac &amp; Linux Standalone - Unity 2020.3.9f1 Personal* &lt;DX11&gt;
        <WinButtons>
          <svg width="10" height="10" viewBox="0 0 10 10" stroke="#222" fill="none"><path d="M0 5H10" /></svg>
          <svg width="10" height="10" viewBox="0 0 10 10" stroke="#222" fill="none"><rect x=".5" y=".5" width="9" height="9" /></svg>
          <svg width="10" height="10" viewBox="0 0 10 10" stroke="#222" fill="none"><path d="M0 0L10 10M10 0L0 10" /></svg>
        </WinButtons>
      </TitleBar>
      <MenuBar>
        {["File", "Edit", "Assets", "GameObject", "Component", "Tools", "ZEPETO", "Window", "Help"].map(m => <span key={m}>{m}</span>)}
      </MenuBar>
      <Toolbar>
        <ToolGroup>
          <ToolBtn><FaHandPaper size={15} color="#d8d8d8" /></ToolBtn>
          <ToolBtn $active><Move size={15} strokeWidth={1.5} /></ToolBtn>
          <ToolBtn><svg width="15" height="15" viewBox="0 0 15 15" fill="none" stroke="#c4c4c4" strokeWidth="1.1"><path d="M10 2.2A6 6 0 0 0 5 13M5 12.8A6 6 0 0 0 10 2" /><path d="M8 1L10.5 2 9 4.5M7 14L4.5 13 6 10.5" /></svg></ToolBtn>
          <ToolBtn><Scaling size={15} strokeWidth={1.2} /></ToolBtn>
          <ToolBtn><svg width="14" height="14" viewBox="0 0 14 14" fill="none" stroke="#c4c4c4" strokeWidth="1.2"><path d="M1 4V1H4M10 1H13V4M13 10V13H10M4 13H1V10M6 1H8M6 13H8M1 6V8M13 6V8" /></svg></ToolBtn>
          <ToolBtn><svg width="15" height="15" viewBox="0 0 15 15" fill="none" stroke="#c4c4c4" strokeWidth="1"><circle cx="7.5" cy="7.5" r="5.5" strokeDasharray="2 1" /><path d="M7.5 1V14M1 7.5H14" /></svg></ToolBtn>
          <ToolBtn><FaTools size={13} /></ToolBtn>
        </ToolGroup>
        <ToolGroup $ml={10}>
          <ToolBtn $w={62}>
            <svg width="14" height="16" viewBox="0 0 14 16" fill="none"><path d="M1 14V1H13V10M1 10L10 1" stroke="#c4c4c4" strokeWidth="1" /><circle cx="3.5" cy="12.5" r="2.5" stroke="#e0713a" strokeWidth="1.2" /></svg>Pivot
          </ToolBtn>
          <ToolBtn $w={63}>
            <svg width="14" height="16" viewBox="0 0 14 16" fill="none"><path d="M7 1L13 4V11L7 14 1 11V4Z M1 4L7 7 13 4M7 7V14" stroke="#c4c4c4" strokeWidth="1" /><circle cx="10" cy="12" r="2.5" stroke="#e0713a" strokeWidth="1.2" /></svg>Local
          </ToolBtn>
        </ToolGroup>
        <ToolGroup $ml={9}>
          <ToolBtn $w={31}>
            <svg width="14" height="14" viewBox="0 0 14 14" fill="none"><path d="M4 1V9M8 1V6M1 3H11M1 7H7" stroke="#7a7a7a" strokeWidth="1" /><path d="M6 10H11M6 13H11M11 10A1.5 1.5 0 0 1 11 13" stroke="#d5683a" strokeWidth="1.3" /></svg>
          </ToolBtn>
        </ToolGroup>
        <ToolGroup $ml={484}>
          <ToolBtn><FaPlay size={10} /></ToolBtn>
          <ToolBtn><FaPause size={10} /></ToolBtn>
          <ToolBtn><FaStepForward size={10} color="#8a8a8a" /></ToolBtn>
        </ToolGroup>
        <ToolBtn $w={30} $auto><FaCloud size={14} /></ToolBtn>
        <DropBtn $w={78} $ml={10}>Account <Caret /></DropBtn>
        <DropBtn $w={78} $ml={10}>Layers <Caret /></DropBtn>
        <DropBtn $w={108} $ml={10}>Layout <Caret /></DropBtn>
      </Toolbar>
      <Main>
        <LeftArea>
          <TopRow>
            <Hierarchy>
              <TabBar>
                <Tab $active $w={92}><List size={12} color="#9a9a9a" />Hierarchy</Tab>
                <TabEnd><Unlock /><Dots /></TabEnd>
              </TabBar>
              <Strip>
                <PlusBtn>
                  <svg width="13" height="13" viewBox="0 0 13 13" stroke="#c4c4c4" strokeWidth="1.8"><path d="M6.5 0V13M0 6.5H13" /></svg>
                  <Caret />
                </PlusBtn>
                <SearchField><Search size={9} color="#9a9a9a" />All</SearchField>
              </Strip>
              <HierList>
                <HRow $bg="#4a4a4a" $strong>
                  <Gutter><EyeOff size={11} /></Gutter>
                  <HArrow $w={15}><Tri /></HArrow>
                  <IconSlot><UnityMark s={13} c="#d4d4d4" w={6} /></IconSlot>
                  <TLabel>Shirts_uv*</TLabel>
                  <RowEnd><Dots /></RowEnd>
                </HRow>
                <HRow>
                  <Gutter><EyeOff size={11} /></Gutter>
                  <HArrow $w={29} />
                  <IconSlot><Cube /></IconSlot><TLabel>Main Camera</TLabel>
                </HRow>
                <HRow>
                  <Gutter><EyeOff size={11} /></Gutter>
                  <HArrow $w={29} />
                  <IconSlot><Cube /></IconSlot><TLabel>Directional Light</TLabel>
                </HRow>
                <HRow $bg="#414141">
                  <Gutter />
                  <HArrow $w={29}><Tri dir="r" /></HArrow>
                  <IconSlot><Cube /></IconSlot><TLabel>shirts</TLabel>
                </HRow>
              </HierList>
            </Hierarchy>
            <SceneCol>
              <TabBar>
                <Tab $active $blue $w={77}><TabIcon $ml={3}><Hash size={12} /></TabIcon>Scene</Tab>
                <Tab $w={77}><TabIcon $ml={2}><FaGamepad size={14} color="#c4c4c4" /></TabIcon>Game</Tab>
                <Tab><TabIcon $ml={3}><FaShoppingBag size={11} color="#c4c4c4" /></TabIcon>Asset Store</Tab>
                <TabEnd><Dots /></TabEnd>
              </TabBar>
              <SceneStrip>
                <SBtn $w={122} $left>Shaded <Caret /></SBtn>
                <SBtn $w={34}><TwoD>2D</TwoD></SBtn>
                <SBtn $w={28}><FaLightbulb size={12} /></SBtn>
                <SBtn $w={25}><FaVolumeUp size={11} /></SBtn>
                <SBtn $w={25} $active>
                  <svg width="15" height="14" viewBox="0 0 15 14" fill="#c4c4c4"><path d="M7.5 7L14 10 7.5 13.5 1 10Z" /><path d="M7.5 4.5L14 7.5 13 8 7.5 5.5 2 8 1 7.5Z" /><path d="M8.5 0L9.5 2.2 11.5 3 9.5 3.8 8.5 6 7.5 3.8 5.5 3 7.5 2.2Z" /></svg>
                </SBtn>
                <SBtn $w={20} $active><Caret /></SBtn>
                <SBtn $w={30}><EyeOff size={12} />2</SBtn>
                <SBtn $w={24}><Hash size={13} /></SBtn>
                <SBtn $w={20}><Caret /></SBtn>
                <Spacer />
                <SBtn $w={24}><FaTools size={13} /></SBtn>
                <SBtn $w={38}>
                  <svg width="14" height="10" viewBox="0 0 14 10" fill="#c4c4c4"><rect width="9" height="10" rx="1" /><path d="M10 3L13 1V9L10 7Z" /></svg><Caret />
                </SBtn>
                <SBtn $w={69} $active $left>Gizmos <Caret /></SBtn>
                <SearchField $w={204} $ml={7}><Search size={9} color="#9a9a9a" />All</SearchField>
              </SceneStrip>
              <Viewport>
                <SceneDrawing />
                <OverlayBar>
                  <OverlayGroup>
                    <OverlayBtn $w={31}><UMark h={12} /></OverlayBtn>
                    <OverlayBtn $w={31}>
                      <svg width="16" height="16" viewBox="0 0 16 16"><path d="M6 3L12 6V13L6 16 1 13V6Z" fill="#a0a0a0" /><path d="M13 0V5M10.5 2.5H15.5" stroke="#bbb" /></svg>
                    </OverlayBtn>
                    <OverlayBtn $w={31}><Gear s={15} bg="#383838" /></OverlayBtn>
                  </OverlayGroup>
                  <OverlayGroup>
                    <OverlayBtn><svg width="10" height="10" viewBox="0 0 10 10" fill="none" stroke="#b5b5b5" strokeWidth="1.2"><circle cx="5" cy="5" r="4" /></svg></OverlayBtn>
                    <OverlayBtn><svg width="10" height="12" viewBox="0 0 10 12" stroke="#b5b5b5"><path d="M1 11L9 1" /></svg></OverlayBtn>
                    <OverlayBtn $active><svg width="10" height="16" viewBox="0 0 10 16" fill="none" stroke="#c8c8c8"><path d="M1 4L9 1V12L1 15Z" /></svg></OverlayBtn>
                    <OverlayBtn><svg width="14" height="16" viewBox="0 0 14 16" fill="#a8a8a8"><path d="M7 1L13 4V12L7 15 1 12V4Z" /></svg></OverlayBtn>
                  </OverlayGroup>
                </OverlayBar>
              </Viewport>
            </SceneCol>
          </TopRow>
          <Project>
            <TabBar>
              <Tab $active $w={77}><FaFolder size={12} color="#c4c4c4" />Project</Tab>
              <Tab><TabIcon $ml={5}><List size={12} /></TabIcon>Console</Tab>
              <TabEnd><Unlock /><Dots /></TabEnd>
            </TabBar>
            <Strip>
              <PlusBtn>
                <svg width="13" height="13" viewBox="0 0 13 13" stroke="#c4c4c4" strokeWidth="1.8"><path d="M6.5 0V13M0 6.5H13" /></svg>
                <Caret />
              </PlusBtn>
              <Spacer />
              <SearchField $w={299}><Search size={9} color="#c4c4c4" /></SearchField>
              <SBtn $w={26} $ml={3}>
                <svg width="12" height="16" viewBox="0 0 12 16" fill="#c4c4c4"><rect x="1" y="1" width="6" height="7" /><circle cx="4" cy="12" r="3" /><path d="M8 5L11 11H6Z" /></svg>
              </SBtn>
              <SBtn $w={26}><FaTag size={11} /></SBtn>
              <SBtn $w={26}><FaStar size={12} color="#8a8a8a" /></SBtn>
              <SBtn $w={33}><EyeOff size={13} />4</SBtn>
            </Strip>
            <ProjBody>
              <ProjTree>
                <TRow $strong><ArrowSlot><Tri /></ArrowSlot><IconSlot><FaStar size={12} color="#f4b41a" /></IconSlot><TLabel>Favorites</TLabel></TRow>
                {["All Materials", "All Models", "All Prefabs"].map(t => (
                  <TRow key={t} $level={1}><ArrowSlot /><IconSlot><Search size={12} strokeWidth={1.3} color="#bdbdbd" /></IconSlot><TLabel>{t}</TLabel></TRow>
                ))}
                <TRow $top={15} $sel $strong><ArrowSlot><Tri /></ArrowSlot><IconSlot><FaFolderOpen size={13} color="#c4c4c4" /></IconSlot><TLabel>Assets</TLabel></TRow>
                {[["Contents", 1], ["sd_result", 0], ["UModeler-Hub", 1], ["UModeler_Scene_UModeler", 0], ["ZepetoBasicShortSleeveT-Shirt", 1], ["ZepetoRiggingHelperMeshes", 0]].map(([t, a]) => (
                  <TRow key={t as string} $level={1}><ArrowSlot>{a ? <Tri dir="r" /> : null}</ArrowSlot><IconSlot><FaFolder size={12} color="#c4c4c4" /></IconSlot><TLabel>{t}</TLabel></TRow>
                ))}
                <TRow $strong><ArrowSlot><Tri dir="r" /></ArrowSlot><IconSlot><FaFolder size={12} color="#c4c4c4" /></IconSlot><TLabel>Packages</TLabel></TRow>
              </ProjTree>
              <ProjRight>
                <AssetsHead>Assets</AssetsHead>
                <AssetGrid>
                  {assets.map(a => <AssetCell key={a}><AssetIcon><Folder /></AssetIcon><AssetName>{a}</AssetName></AssetCell>)}
                  <AssetCell><AssetIcon><UnityMark s={48} /></AssetIcon><AssetName>Playground</AssetName></AssetCell>
                  <AssetCell><AssetIcon><Bulb /></AssetIcon><AssetName>Playgroun...</AssetName></AssetCell>
                </AssetGrid>
                <ProjFoot><MiniSlider><MiniThumb $x={27} /></MiniSlider></ProjFoot>
              </ProjRight>
            </ProjBody>
          </Project>
        </LeftArea>
        <Splitter />
        <Inspector>
          <TabBar>
            <Tab $active $w={93}><TabIcon $ml={5}><FaInfoCircle size={11} color="#c4c4c4" /></TabIcon>Inspector</Tab>
            <TabEnd><Unlock /><Dots /></TabEnd>
          </TabBar>
          <InspBody>
            <InspContent>
              <ObjectHead>
                <ObjIcon><Cube s={20} /></ObjIcon>
                <ObjCol>
                  <ObjRow>
                    <Check $ml={4}><CheckMark /></Check>
                    <NameField>shirts</NameField>
                    <Check $ml={4} />
                    <SmallLabel $ml={5}>Static</SmallLabel>
                    <CaretWrap><Caret /></CaretWrap>
                  </ObjRow>
                  <ObjRow>
                    <SmallLabel>Tag</SmallLabel>
                    <Dropdown $w={191} $ml={5}>Untagged <Caret /></Dropdown>
                    <SmallLabel $ml={13}>Layer</SmallLabel>
                    <Dropdown $w={181} $ml={5}>Default <Caret /></Dropdown>
                  </ObjRow>
                </ObjCol>
              </ObjectHead>
              <CompHead>
                <HeadArrow><Tri s={10} /></HeadArrow>
                <HeadIcon $w={38}>
                  <svg width="14" height="14" viewBox="0 0 14 14" fill="none" strokeWidth="2"><path d="M7 7V1" stroke="#6fbf3a" /><path d="M7 7L1 12" stroke="#4a90d8" /><path d="M7 7L13 12" stroke="#d8603a" /></svg>
                </HeadIcon>
                Transform
                <HeadTools><FaQuestionCircle size={11} /><SlidersHorizontal size={12} /><DotsWrap><Dots /></DotsWrap></HeadTools>
              </CompHead>
              <TransformBody>
                {[["Position", "0", "0", "0"], ["Rotation", "0", "0", "0"], ["Scale", "1", "1", "1"]].map(r => (
                  <VecRow key={r[0]}>
                    <VecLabel>{r[0]}</VecLabel>
                    <Axis $w={11}>X</Axis><VecField $w={78}>{r[1]}</VecField>
                    <Axis $w={11} $ml={7}>Y</Axis><VecField $w={78}>{r[2]}</VecField>
                    <Axis $w={11} $ml={6}>Z</Axis><VecField $w={79}>{r[3]}</VecField>
                  </VecRow>
                ))}
              </TransformBody>
              <CompHead>
                <HeadArrow><Tri s={10} /></HeadArrow>
                <HeadIcon $w={38}>
                  <svg width="12" height="14" viewBox="0 0 12 14"><rect width="12" height="14" rx="1" fill="#e8eef4" /><text x="1.5" y="10.5" fontSize="8" fill="#2f86c8" fontFamily="Inter" fontWeight="700">C#</text></svg>
                  <Check><CheckMark /></Check>
                </HeadIcon>
                U Modeler X Editable Mesh (Script)
                <HeadTools><FaQuestionCircle size={11} /><SlidersHorizontal size={12} /><DotsWrap><Dots /></DotsWrap></HeadTools>
              </CompHead>
              <ScriptBody>
                <Card>
                  <CardTitle><UMark h={14} />UModeler X 0.19.17</CardTitle>
                  <SrcRow><FaLock size={10} color="#8f8f8f" /><SrcLabel>Source Mesh</SrcLabel><SrcPill>Source Mesh</SrcPill></SrcRow>
                  <SrcFoot>
                    <svg width="12" height="12" viewBox="0 0 12 12" fill="none" stroke="#a8a8a8"><rect x=".5" y=".5" width="9" height="8" /><path d="M3 11.5H11.5V4M2 3H8M2 5H8" /></svg>
                    <MiniIcons>
                      <svg width="12" height="12" viewBox="0 0 12 12" fill="none" stroke="#a8a8a8"><rect x=".5" y=".5" width="11" height="11" /><path d="M3 3.5H9M3 6H9M3 8.5H9" /></svg>
                      <svg width="12" height="12" viewBox="0 0 12 12" fill="none" stroke="#a8a8a8"><rect x=".5" y=".5" width="11" height="11" /><path d="M6 3V9M3 6H9" /></svg>
                      <svg width="12" height="12" viewBox="0 0 12 12" fill="none" stroke="#a8a8a8"><rect x=".5" y=".5" width="11" height="11" /><path d="M3 6H9" /></svg>
                    </MiniIcons>
                  </SrcFoot>
                </Card>
                <TabsRow>
                  <ModeTab $w={79} $active>
                    <svg width="15" height="15" viewBox="0 0 15 15" fill="none" stroke="#d8507a" strokeWidth="1"><rect x=".5" y="4.5" width="10" height="10" /><rect x="4.5" y=".5" width="10" height="10" /><path d="M.5 4.5L4.5 .5M10.5 4.5L14.5 .5M.5 14.5L4.5 10.5M10.5 14.5L14.5 10.5" /></svg>
                    Modeling
                  </ModeTab>
                  <ModeTab $w={25}>
                    <svg width="14" height="14" viewBox="0 0 14 14" fill="none" stroke="#3fa77a" strokeWidth="1.4"><circle cx="7" cy="2.5" r="1.5" fill="#3fa77a" /><path d="M7 4V13M1 7H13M1 7V13M13 7V13" /></svg>
                  </ModeTab>
                  <ModeTab $w={25}>
                    <svg width="14" height="14" viewBox="0 0 14 14" fill="none" stroke="#4a73c4" strokeWidth="2"><path d="M13 1L5 9M5 9L2 13" /></svg>
                  </ModeTab>
                  <ActionBtn $w={69} $ml="auto">
                    <svg width="16" height="14" viewBox="0 0 16 14" fill="none"><path d="M6 1H12L15 4V13H6V10" stroke="#c8c8c8" strokeWidth="1.4" /><path d="M0 7L5 3V5.5H9V8.5H5V11Z" fill="#e8963f" /></svg>
                    Export
                  </ActionBtn>
                  <ActionBtn $w={66}>
                    <svg width="14" height="14" viewBox="0 0 14 14" fill="none" stroke="#c4c4c4" strokeWidth="1.6"><rect x="1.5" y="1.5" width="11" height="11" /><path d="M1 4H13" strokeWidth="3" /></svg>
                    Editor
                  </ActionBtn>
                </TabsRow>
                <Card>
                  <SectionHead>
                    <svg width="14" height="14" viewBox="0 0 14 14" fill="#b5b5b5"><path d="M0 0H4V1.5H10V0H14V4H12.5V10H14V14H10V12.5H4V14H0V10H1.5V4H0ZM3 3V11H11V3Z" /><rect x="3.5" y="3.5" width="7" height="7" /></svg>
                    Elements (Face)
                  </SectionHead>
                  <SectionBody>
                    <SetRow><SetLabel>Extrude Option</SetLabel><Dropdown $w={256}>Gizmo Default <Caret /></Dropdown></SetRow>
                    <Foldout><Tri />Display</Foldout>
                    <SetRow><SetLabel>XRay Mode</SetLabel><Check /></SetRow>
                    <SetRow><SetLabel>Hide Edge Overlay</SetLabel><Check /></SetRow>
                    <Foldout><Tri />Select</Foldout>
                    <SetRow><SetLabel>Backface Select</SetLabel><Check><CheckMark /></Check></SetRow>
                    <SetRow><SetLabel>Camera Based Select</SetLabel><Check /></SetRow>
                    <Foldout><Tri />Soft Select</Foldout>
                    <SetRow><SetLabel>Soft Selection</SetLabel><Check /></SetRow>
                    <SetRow>
                      <SetLabel>Soft Selection Curve</SetLabel>
                      <CurveField>
                        <svg width="254" height="15" viewBox="0 0 254 15" fill="none" stroke="#1f8a28" strokeWidth="1.2"><path d="M0 13.5L80 13.5 130 11 254 1" /></svg>
                      </CurveField>
                    </SetRow>
                    <SetRow><SetLabel>Soft Selection Range</SetLabel><TextField $w={256}>7.1</TextField></SetRow>
                    <NumGrid>{numbers.map(n => <Btn key={n} $dark={n === 1}>{n}</Btn>)}</NumGrid>
                    <WideGrid>
                      <Btn>Auto Smooth</Btn>
                      <AngleRow>
                        <AngleLabel>Angle</AngleLabel>
                        <AngleSlider><MiniThumb $x={10} $d={10} /></AngleSlider>
                        <TextField $w={50} $ml={5}>60</TextField>
                      </AngleRow>
                      <Btn>Clear Selected Faces</Btn>
                      <Btn>Clear All</Btn>
                    </WideGrid>
                    <OneBtn>1</OneBtn>
                  </SectionBody>
                </Card>
                <ToolCard $mt={4}>
                  <ToolSide $pt={13}>
                    <SideIcon>
                      <svg width="20" height="21" viewBox="0 0 24 24"><path d="M12 0L18 5 12 10 6 5Z" fill="#3aa370" /><path d="M6 9L12 12V19L6 22 0 19V12Z" fill="#d8344a" /><rect x="13" y="11" width="10" height="11" rx="2" fill="#4d9fd8" /></svg>
                    </SideIcon>
                    Primitive<br />Shapes
                  </ToolSide>
                  <ToolGrid>
                    {prims.map(([k, label, pt]) => (
                      <ToolItem key={k} $pt={pt}>
                        <ToolIcon><Prim k={k} /></ToolIcon>
                        {label.split("\n").map(l => <span key={l}>{l}</span>)}
                      </ToolItem>
                    ))}
                  </ToolGrid>
                </ToolCard>
                <ToolCard $mt={6}>
                  <ToolSide $pt={21}>
                    <SideIcon>
                      <svg width="22" height="22" viewBox="0 0 22 22"><path d="M3 13L13 2 17 5 7 17Z" fill="#d8344a" /><path d="M5 15L15 4 18 7 8 19Z" fill="#3aa370" /><path d="M8 18L17 7 20 11 12 21Z" fill="#4a73c4" /><path d="M1 15L5 13 10 19 7 21Z" fill="#e8e8e8" /></svg>
                    </SideIcon>
                    Drawing
                  </ToolSide>
                  <ToolGrid $mt={4}>
                    {[["line", "Line"], ["rect", "Recta..."], ["disk", "Disk"]].map(([k, l]) => (
                      <ToolItem key={k} $pt={12}><ToolIcon><DrawIcon k={k} /></ToolIcon>{l}</ToolItem>
                    ))}
                  </ToolGrid>
                </ToolCard>
              </ScriptBody>
            </InspContent>
            <Scrollbar>
              <Tri c="#bdbdbd" s={7} />
              <ScrollThumb />
              <ScrollDown><Tri c="#bdbdbd" s={7} /></ScrollDown>
            </Scrollbar>
          </InspBody>
        </Inspector>
      </Main>
      <StatusBar>
        <StatusCell><BugOff size={15} /></StatusCell>
        <StatusCell>
          <svg width="16" height="16" viewBox="0 0 16 16" fill="#c4c4c4"><ellipse cx="8" cy="3.5" rx="6" ry="2.5" /><path d="M2 6C4 8 12 8 14 6V8C12 10 4 10 2 8ZM2 10C4 12 12 12 14 10V12.5C12 14.5 4 14.5 2 12.5Z" /><path d="M2 1L14 15" stroke="#191919" strokeWidth="2" /><path d="M2 1L14 15" stroke="#c4c4c4" strokeWidth=".8" /></svg>
        </StatusCell>
        <StatusCell>
          <svg width="16" height="16" viewBox="0 0 16 16" fill="none" stroke="#c4c4c4" strokeWidth="1.1"><circle cx="8" cy="8" r="6" strokeDasharray="3 1" /><ellipse cx="8" cy="8" rx="3" ry="6" /><path d="M2 8H14M2 2L14 14" /></svg>
        </StatusCell>
        <StatusCell><CircleCheck size={15} strokeWidth={1.3} /></StatusCell>
      </StatusBar>
    </Shell>
  );
}
